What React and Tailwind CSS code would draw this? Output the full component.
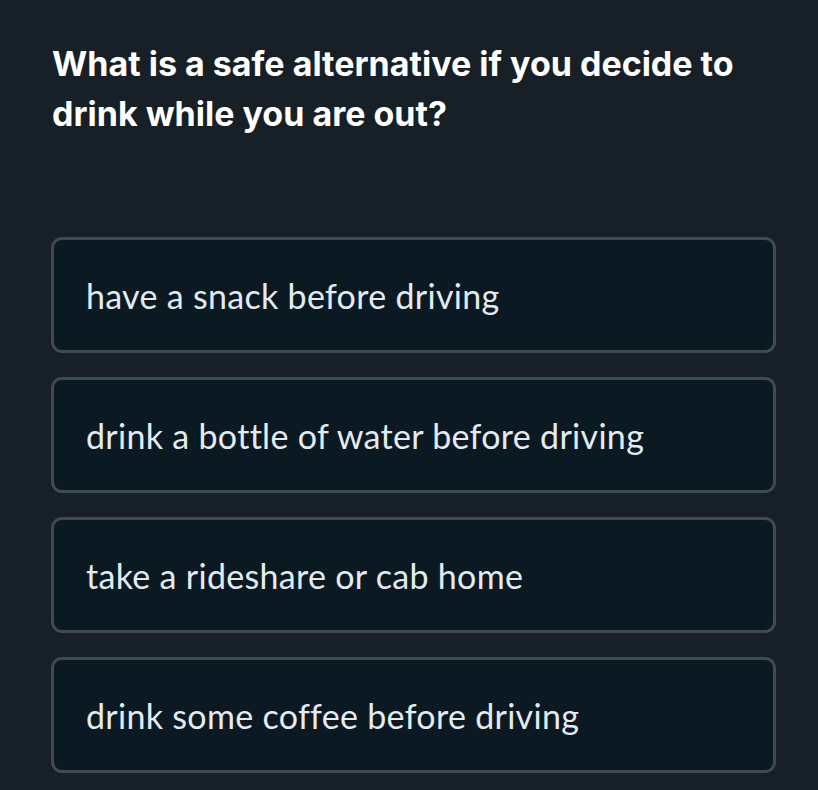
import React from 'react';

const options = [
  'have a snack before driving',
  'drink a bottle of water before driving',
  'take a rideshare or cab home',
  'drink some coffee before driving',
];

const App = () => {
  return (
    <div className="w-[818px] h-[790px] overflow-hidden bg-[#172026] pl-[51px] pr-[42px] pt-[39px]">
      {/* Question */}
      <h1
        className="pl-[1px] text-[34px] leading-[50px] font-bold text-white"
        style={{ fontFamily: 'Inter, "Liberation Sans", sans-serif' }}
      >
        What is a safe alternative if you decide to drink while you are out?
      </h1>

      {/* Answer choices */}
      <div className="mt-[98px] flex flex-col gap-[24px]">
        {options.map((opt) => (
          <button
            key={opt}
            className="h-[116px] w-full rounded-[11px] border-[3px] border-[#3f4a52] bg-[#0b1923] px-[32px] text-left text-[34px] tracking-[0.3px] text-[#e3ebf0]"
            style={{ fontFamily: 'Lato, "Noto Sans", sans-serif' }}
          >
            {opt}
          </button>
        ))}
      </div>
    </div>
  );
};

export default App;
